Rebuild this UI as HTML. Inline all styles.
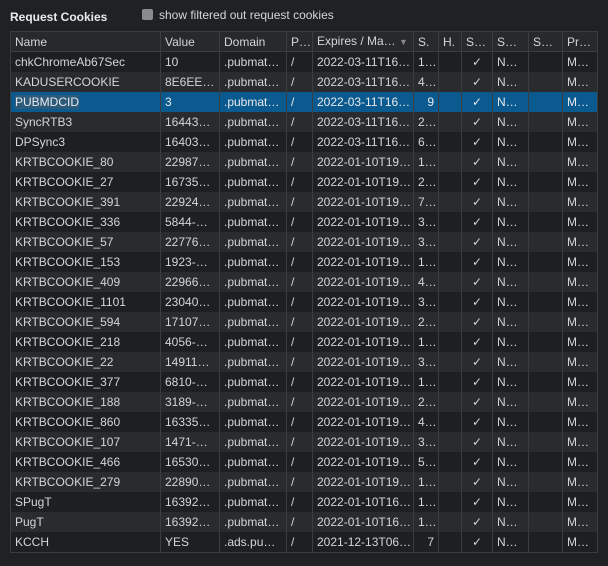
<!DOCTYPE html>
<html><head><style>
html,body{margin:0;padding:0;background:#202124;width:608px;height:566px;overflow:hidden;font-family:"Liberation Sans",Arial,sans-serif;font-size:12px;color:#d3d5d8}
.title{position:absolute;left:10px;top:10px;font-weight:bold;font-size:12px;color:#e8eaed}
.cb{position:absolute;left:142px;top:9px;width:11px;height:11px;background:#8a8b8d;border-radius:2px}
.cbl{position:absolute;left:159px;top:8px;color:#d3d5d8}
table{position:absolute;left:10px;top:31px;border-collapse:collapse;table-layout:fixed;width:587px;border:1px solid #3c3d40}
td,th{border-left:1px solid #3c3d40;border-right:1px solid #3c3d40;height:20px;padding:0 4px;white-space:nowrap;overflow:hidden;font-weight:normal;text-align:left;line-height:20px}
th{background:#28292c;height:18px;line-height:18px;border-bottom:1px solid #3c3d40}
tr:nth-child(odd) td{background:#1e1f21}
tr:nth-child(even) td{background:#2a2b2e}
tr.sel td{background:#0b5a8f;color:#e8eaed}
.c{text-align:center}.r{text-align:right}
.hl{background:#2e5a7a}
</style></head><body>
<div class="title">Request Cookies</div>
<div class="cb"></div><div class="cbl">show filtered out request cookies</div>
<table>
<colgroup><col style="width:150px"><col style="width:59px"><col style="width:67px"><col style="width:26px"><col style="width:101px"><col style="width:25px"><col style="width:23px"><col style="width:31px"><col style="width:36px"><col style="width:34px"><col style="width:35px"></colgroup>
<thead><tr><th>Name</th><th>Value</th><th>Domain</th><th>P…</th><th>Expires / Ma… <span style="color:#888;font-size:9px">▼</span></th><th>S.</th><th>H.</th><th>S…</th><th>S…</th><th>S…</th><th>Pr…</th></tr></thead>
<tbody>
<tr><td>chkChromeAb67Sec</td><td>10</td><td>.pubmat…</td><td>/</td><td>2022-03-11T16…</td><td>1…</td><td></td><td class="c">✓</td><td>N…</td><td></td><td>M…</td></tr>
<tr><td>KADUSERCOOKIE</td><td>8E6EE…</td><td>.pubmat…</td><td>/</td><td>2022-03-11T16…</td><td>4…</td><td></td><td class="c">✓</td><td>N…</td><td></td><td>M…</td></tr>
<tr class="sel"><td><span class="hl">PUBMDCID</span></td><td>3</td><td>.pubmat…</td><td>/</td><td>2022-03-11T16…</td><td class="r">9</td><td></td><td class="c">✓</td><td>N…</td><td></td><td>M…</td></tr>
<tr><td>SyncRTB3</td><td>16443…</td><td>.pubmat…</td><td>/</td><td>2022-03-11T16…</td><td>2…</td><td></td><td class="c">✓</td><td>N…</td><td></td><td>M…</td></tr>
<tr><td>DPSync3</td><td>16403…</td><td>.pubmat…</td><td>/</td><td>2022-03-11T16…</td><td>6…</td><td></td><td class="c">✓</td><td>N…</td><td></td><td>M…</td></tr>
<tr><td>KRTBCOOKIE_80</td><td>22987…</td><td>.pubmat…</td><td>/</td><td>2022-01-10T19…</td><td>1…</td><td></td><td class="c">✓</td><td>N…</td><td></td><td>M…</td></tr>
<tr><td>KRTBCOOKIE_27</td><td>16735…</td><td>.pubmat…</td><td>/</td><td>2022-01-10T19…</td><td>2…</td><td></td><td class="c">✓</td><td>N…</td><td></td><td>M…</td></tr>
<tr><td>KRTBCOOKIE_391</td><td>22924…</td><td>.pubmat…</td><td>/</td><td>2022-01-10T19…</td><td>7…</td><td></td><td class="c">✓</td><td>N…</td><td></td><td>M…</td></tr>
<tr><td>KRTBCOOKIE_336</td><td>5844-…</td><td>.pubmat…</td><td>/</td><td>2022-01-10T19…</td><td>3…</td><td></td><td class="c">✓</td><td>N…</td><td></td><td>M…</td></tr>
<tr><td>KRTBCOOKIE_57</td><td>22776…</td><td>.pubmat…</td><td>/</td><td>2022-01-10T19…</td><td>3…</td><td></td><td class="c">✓</td><td>N…</td><td></td><td>M…</td></tr>
<tr><td>KRTBCOOKIE_153</td><td>1923-…</td><td>.pubmat…</td><td>/</td><td>2022-01-10T19…</td><td>1…</td><td></td><td class="c">✓</td><td>N…</td><td></td><td>M…</td></tr>
<tr><td>KRTBCOOKIE_409</td><td>22966…</td><td>.pubmat…</td><td>/</td><td>2022-01-10T19…</td><td>4…</td><td></td><td class="c">✓</td><td>N…</td><td></td><td>M…</td></tr>
<tr><td>KRTBCOOKIE_1101</td><td>23040…</td><td>.pubmat…</td><td>/</td><td>2022-01-10T19…</td><td>3…</td><td></td><td class="c">✓</td><td>N…</td><td></td><td>M…</td></tr>
<tr><td>KRTBCOOKIE_594</td><td>17107…</td><td>.pubmat…</td><td>/</td><td>2022-01-10T19…</td><td>2…</td><td></td><td class="c">✓</td><td>N…</td><td></td><td>M…</td></tr>
<tr><td>KRTBCOOKIE_218</td><td>4056-…</td><td>.pubmat…</td><td>/</td><td>2022-01-10T19…</td><td>1…</td><td></td><td class="c">✓</td><td>N…</td><td></td><td>M…</td></tr>
<tr><td>KRTBCOOKIE_22</td><td>14911…</td><td>.pubmat…</td><td>/</td><td>2022-01-10T19…</td><td>3…</td><td></td><td class="c">✓</td><td>N…</td><td></td><td>M…</td></tr>
<tr><td>KRTBCOOKIE_377</td><td>6810-…</td><td>.pubmat…</td><td>/</td><td>2022-01-10T19…</td><td>1…</td><td></td><td class="c">✓</td><td>N…</td><td></td><td>M…</td></tr>
<tr><td>KRTBCOOKIE_188</td><td>3189-…</td><td>.pubmat…</td><td>/</td><td>2022-01-10T19…</td><td>2…</td><td></td><td class="c">✓</td><td>N…</td><td></td><td>M…</td></tr>
<tr><td>KRTBCOOKIE_860</td><td>16335…</td><td>.pubmat…</td><td>/</td><td>2022-01-10T19…</td><td>4…</td><td></td><td class="c">✓</td><td>N…</td><td></td><td>M…</td></tr>
<tr><td>KRTBCOOKIE_107</td><td>1471-…</td><td>.pubmat…</td><td>/</td><td>2022-01-10T19…</td><td>3…</td><td></td><td class="c">✓</td><td>N…</td><td></td><td>M…</td></tr>
<tr><td>KRTBCOOKIE_466</td><td>16530…</td><td>.pubmat…</td><td>/</td><td>2022-01-10T19…</td><td>5…</td><td></td><td class="c">✓</td><td>N…</td><td></td><td>M…</td></tr>
<tr><td>KRTBCOOKIE_279</td><td>22890…</td><td>.pubmat…</td><td>/</td><td>2022-01-10T19…</td><td>1…</td><td></td><td class="c">✓</td><td>N…</td><td></td><td>M…</td></tr>
<tr><td>SPugT</td><td>16392…</td><td>.pubmat…</td><td>/</td><td>2022-01-10T16…</td><td>1…</td><td></td><td class="c">✓</td><td>N…</td><td></td><td>M…</td></tr>
<tr><td>PugT</td><td>16392…</td><td>.pubmat…</td><td>/</td><td>2022-01-10T16…</td><td>1…</td><td></td><td class="c">✓</td><td>N…</td><td></td><td>M…</td></tr>
<tr><td>KCCH</td><td>YES</td><td>.ads.pu…</td><td>/</td><td>2021-12-13T06…</td><td class="r">7</td><td></td><td class="c">✓</td><td>N…</td><td></td><td>M…</td></tr>
</tbody></table>
</body></html>
